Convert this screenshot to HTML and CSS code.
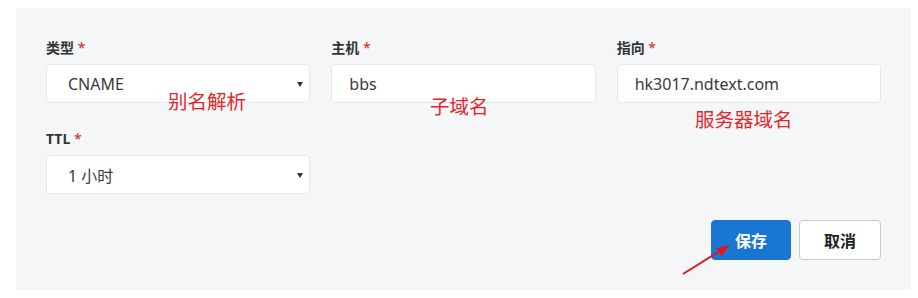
FILE: index.html
```html
<!DOCTYPE html>
<html lang="zh-CN">
<head>
<meta charset="utf-8">
<title>记录</title>
<link rel="stylesheet" href="styles.css">
</head>
<body>
<div class="panel">
  <div class="grid">
    <div class="field">
      <label class="label">类型 <span class="req">*</span></label>
      <div class="control select"><span>CNAME</span>
        <svg class="caret" width="6" height="5" viewBox="0 0 6 5"><path d="M0 0H6L3 5Z" fill="#333"/></svg>
      </div>
    </div>
    <div class="field">
      <label class="label">主机 <span class="req">*</span></label>
      <div class="control"><span>bbs</span></div>
    </div>
    <div class="field">
      <label class="label">指向 <span class="req">*</span></label>
      <div class="control"><span>hk3017.ndtext.com</span></div>
    </div>
    <div class="field">
      <label class="label">TTL <span class="req">*</span></label>
      <div class="control select"><span>1 小时</span>
        <svg class="caret" width="6" height="5" viewBox="0 0 6 5"><path d="M0 0H6L3 5Z" fill="#333"/></svg>
      </div>
    </div>
  </div>
  <div class="actions">
    <button class="btn primary">保存</button>
    <button class="btn">取消</button>
  </div>

  <div class="note n1">别名解析</div>
  <div class="note n2">子域名</div>
  <div class="note n3">服务器域名</div>
  <svg class="arrow" width="60" height="40" viewBox="0 0 60 40">
    <line x1="2" y1="38" x2="42" y2="13" stroke="#e3161c" stroke-width="2"/>
    <path d="M48 9L35.5 12.3L40.9 20.7Z" fill="#e3161c"/>
  </svg>
</div>
</body>
</html>
```
FILE: styles.css
```css
html, body {
  margin: 0;
  padding: 0;
  background: #ffffff;
}
body {
  font-family: "Noto Sans", "Noto Sans CJK SC", sans-serif;
  color: #333;
}
.panel {
  position: relative;
  box-sizing: border-box;
  width: 895px;
  height: 282px;
  margin: 8px 0 0 16px;
  padding: 30px 30px 30px 30px;
  background: #f5f6f8;
}
.grid {
  display: grid;
  grid-template-columns: repeat(3, 1fr);
  column-gap: 21px;
  row-gap: 26px;
}
.field {
  display: flex;
  flex-direction: column;
}
.label {
  font-size: 14px;
  font-weight: 700;
  line-height: 20px;
  height: 20px;
  margin-bottom: 6px;
  color: #333;
}
.req {
  color: #d9232d;
  font-weight: 400;
}
.control {
  position: relative;
  box-sizing: border-box;
  height: 39px;
  display: flex;
  align-items: center;
  padding-left: 17px;
  background: #fff;
  border: 1px solid #e6e7ea;
  border-radius: 4px;
  font-size: 16px;
  color: #3a3a3a;
}
.select {
  padding-left: 21px;
}
.caret {
  position: absolute;
  right: 6px;
  top: 17px;
}
.actions {
  display: flex;
  justify-content: flex-end;
  gap: 8px;
  margin-top: 26px;
}
.btn {
  box-sizing: border-box;
  height: 40px;
  width: 82px;
  border: 1px solid #c9cbcf;
  border-radius: 4px;
  background: #fff;
  font-family: "Noto Sans CJK SC", sans-serif;
  font-size: 16px;
  font-weight: 700;
  color: #222;
  padding: 0;
}
.btn.primary {
  width: 80px;
  background: #1a76d3;
  border-color: #1a76d3;
  color: #fff;
}
.note {
  position: absolute;
  font-family: "Noto Sans CJK SC", sans-serif;
  font-size: 19.5px;
  line-height: 20px;
  color: #e3262b;
  font-weight: 400;
}
.n1 { left: 152px; top: 83px; }
.n2 { left: 414px; top: 88px; }
.n3 { left: 679px; top: 101px; }
.arrow {
  position: absolute;
  left: 665px;
  top: 228px;
}
```
